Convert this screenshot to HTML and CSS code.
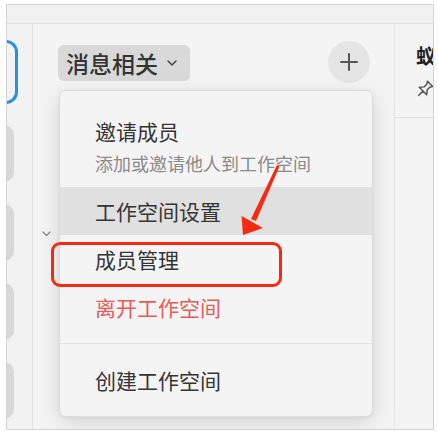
FILE: index.html
```html
<!DOCTYPE html>
<html lang="zh-CN">
<head>
<meta charset="utf-8">
<title>消息相关</title>
<link rel="stylesheet" href="styles.css">
</head>
<body>
<div class="frame">
  <div class="topbar"></div>
  <div class="layout">
    <div class="rail">
      <div class="ws ws-active"></div>
      <div class="ws"></div>
      <div class="ws"></div>
      <div class="ws"></div>
      <div class="ws"></div>
    </div>
    <div class="main">
      <div class="main-head">
        <div class="title-btn">
          <span class="title-text">消息相关</span>
          <svg class="title-caret" width="10" height="6" viewBox="0 0 10 6"><path d="M1 1 L5 5 L9 1" fill="none" stroke="#444" stroke-width="1.5" stroke-linecap="round" stroke-linejoin="round"/></svg>
        </div>
        <div class="add-btn">
          <svg width="18" height="18" viewBox="0 0 18 18"><path d="M9 1 V17 M1 9 H17" stroke="#555" stroke-width="2" stroke-linecap="round"/></svg>
        </div>
      </div>
      <div class="group-row">
        <svg width="9" height="6" viewBox="0 0 9 6"><path d="M1 1 L4.5 4.5 L8 1" fill="none" stroke="#888" stroke-width="1.3" stroke-linecap="round" stroke-linejoin="round"/></svg>
      </div>
    </div>
    <div class="side">
      <div class="side-head">
        <div class="side-title">蚁群</div>
        <svg class="pin" width="19" height="19" viewBox="0 0 18 18">
          <g transform="rotate(45 9 9)">
            <path d="M5.5 1.5 H12.5 L11 4 V7.5 L14 11 H4 L7 7.5 V4 Z M9 11 V17" fill="none" stroke="#555" stroke-width="1.4" stroke-linejoin="round" stroke-linecap="round"/>
          </g>
        </svg>
      </div>
    </div>
  </div>

  <div class="menu">
    <div class="menu-item invite">
      <div class="item-title">邀请成员</div>
      <div class="item-sub">添加或邀请他人到工作空间</div>
    </div>
    <div class="menu-item row hover">工作空间设置</div>
    <div class="menu-item row">成员管理</div>
    <div class="menu-item row danger">离开工作空间</div>
    <div class="menu-divider"></div>
    <div class="menu-item row">创建工作空间</div>
  </div>

  <div class="annot-box"></div>
  <svg class="annot-arrow" width="426" height="424" viewBox="7 5 426 424">
    <polygon points="277,165 279.5,166.5 256,221 251,219" fill="#f42a12"/>
    <polygon points="243,235 241.5,216 263,228" fill="#f42a12"/>
  </svg>
</div>
</body>
</html>
```

FILE: styles.css
```css
* { box-sizing: border-box; }

html, body {
  margin: 0;
  padding: 0;
  background: #ffffff;
  font-family: "Noto Sans CJK SC", "Noto Sans", "Liberation Sans", sans-serif;
}

.frame {
  position: relative;
  margin: 4px 0 0 6px;
  width: 428px;
  height: 426px;
  border: 1px solid #d3d3d3;
  background: #f3f3f3;
  overflow: hidden;
  display: flex;
  flex-direction: column;
}

.topbar {
  height: 19px;
  flex: 0 0 19px;
  background: #f1f1f1;
  border-bottom: 1px solid #e2e2e2;
}

.layout {
  flex: 1;
  display: flex;
  min-height: 0;
}

/* left workspace rail */
.rail {
  width: 26px;
  flex: 0 0 26px;
  background: #f2f2f2;
  border-right: 1px solid #e3e3e3;
  overflow: hidden;
  display: flex;
  flex-direction: column;
  padding-top: 16px;
  gap: 22px;
}

.ws {
  width: 40px;
  height: 57px;
  flex: 0 0 57px;
  margin-left: -33px;
  border-radius: 10px;
  background: #d8d8d8;
}

.ws-active {
  height: 64px;
  flex: 0 0 64px;
  margin-left: -29px;
  background: #f3f3f3;
  border: 3px solid #2a8fdf;
  border-radius: 12px;
  margin-bottom: -1px;
}

/* main column */
.main {
  width: 362px;
  flex: 0 0 362px;
  background: #f4f4f4;
  border-right: 1px solid #e3e3e3;
}

.main-head {
  display: flex;
  align-items: center;
  justify-content: space-between;
  padding: 17px 24px 0 25px;
}

.title-btn {
  display: flex;
  align-items: center;
  height: 36px;
  padding: 0 13px 0 8px;
  background: #d9d9d9;
  border-radius: 6px;
  margin-top: 1px;
}

.title-text {
  font-size: 23px;
  line-height: 36px;
  color: #333333;
  font-weight: 500;
}

.title-caret {
  margin-left: 9px;
  margin-top: 1px;
}

.add-btn {
  width: 42px;
  height: 42px;
  border-radius: 50%;
  background: #e5e5e5;
  display: flex;
  align-items: center;
  justify-content: center;
}

.group-row {
  margin-top: 148px;
  padding-left: 9px;
  height: 6px;
  display: flex;
}

/* right panel */
.side {
  flex: 1;
  background: #f4f4f4;
  overflow: hidden;
}

.side-head {
  height: 94px;
  border-bottom: 1px solid #e0e0e0;
  padding: 18px 0 0 21px;
  white-space: nowrap;
}

.side-title {
  font-size: 20px;
  line-height: 28px;
  font-weight: 700;
  color: #222222;
}

.pin {
  display: block;
  margin-top: 10px;
  margin-left: -1px;
}

/* dropdown menu */
.menu {
  position: absolute;
  left: 52px;
  top: 85px;
  width: 314px;
  background: #f4f4f4;
  border: 1px solid #dcdcdc;
  border-radius: 7px;
  padding: 11px 0 12px;
  box-shadow: 0 6px 22px rgba(0, 0, 0, 0.13), 0 1px 4px rgba(0, 0, 0, 0.05);
}

.menu-item {
  padding: 0 20px 0 35px;
  color: #353535;
}

.invite {
  padding-top: 15px;
  padding-bottom: 12px;
}

.item-title {
  font-size: 21px;
  line-height: 28px;
}

.item-sub {
  margin-top: 6px;
  font-size: 18px;
  line-height: 24px;
  color: #8a8a8a;
}

.row {
  height: 48px;
  font-size: 21px;
  line-height: 48px;
}

.hover {
  background: #e0e0e0;
}

.danger {
  color: #ea5a57;
}

.menu-divider {
  height: 1px;
  background: #e2e2e2;
  margin: 12px 0;
}

/* annotations */
.annot-box {
  position: absolute;
  left: 44px;
  top: 237px;
  width: 231px;
  height: 45px;
  border: 3px solid #f42a12;
  border-radius: 9px;
}

.annot-arrow {
  position: absolute;
  left: 0;
  top: 0;
}
```
